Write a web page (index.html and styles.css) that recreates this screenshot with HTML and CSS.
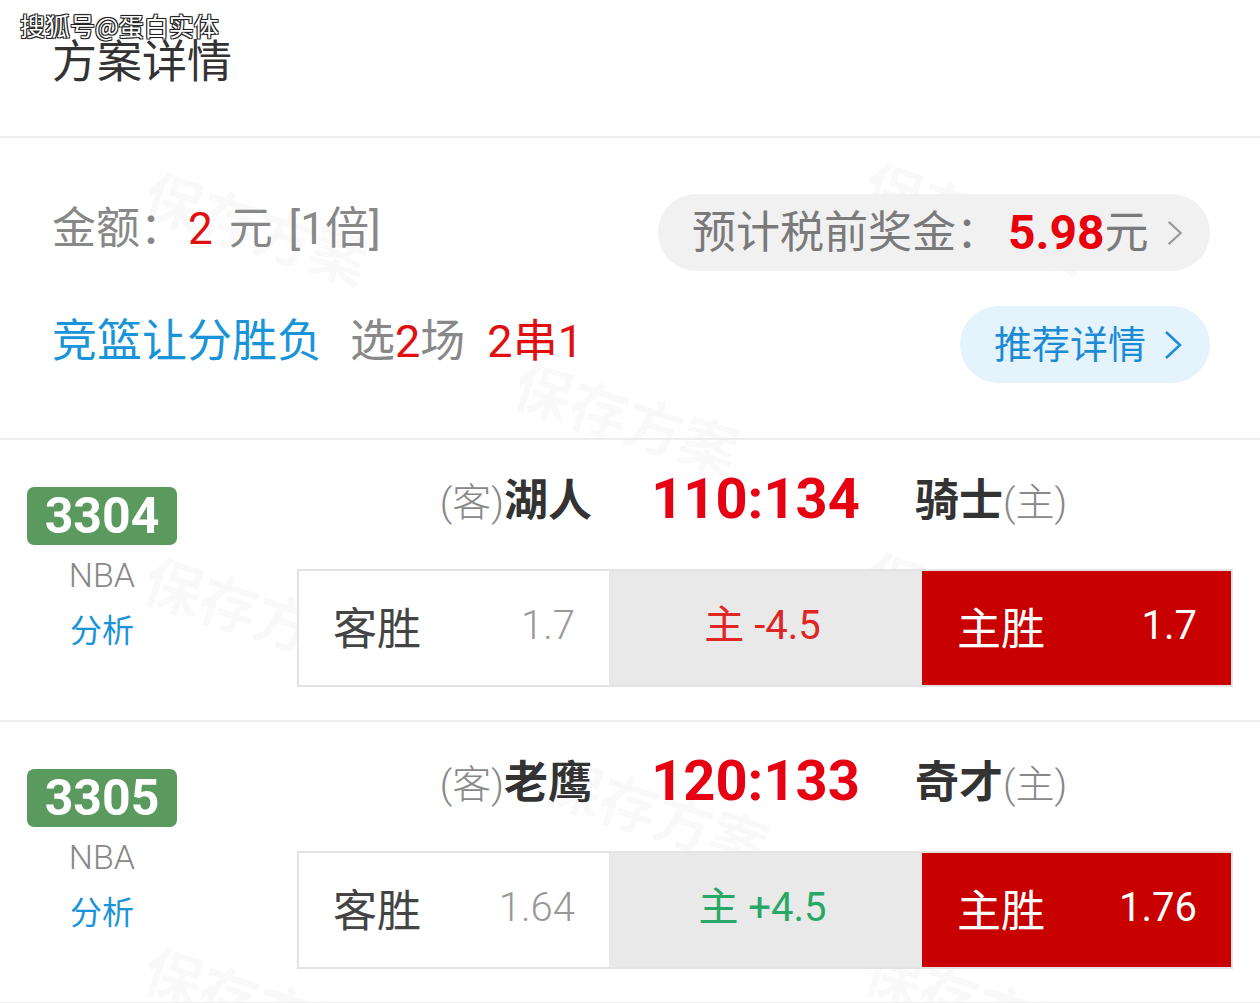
FILE: index.html
```html
<!DOCTYPE html>
<html lang="zh-CN">
<head>
    <meta charset="UTF-8">
    <meta name="viewport" content="width=device-width, initial-scale=1.0">
    <title>方案详情</title>
    <link rel="stylesheet" href="styles.css">
</head>
<body>

<div class="watermarks">
    <span class="wm" style="left:160px;top:150px">保存方案</span>
    <span class="wm" style="left:880px;top:140px">保存方案</span>
    <span class="wm" style="left:530px;top:340px">保存方案</span>
    <span class="wm" style="left:160px;top:535px">保存方案</span>
    <span class="wm" style="left:880px;top:530px">保存方案</span>
    <span class="wm" style="left:560px;top:735px">保存方案</span>
    <span class="wm" style="left:160px;top:925px">保存方案</span>
    <span class="wm" style="left:880px;top:925px">保存方案</span>
</div>

<header class="header">
    <div class="source-mark">搜狐号@蛋白实体</div>
    <h1 class="title">方案详情</h1>
</header>

<section class="summary">
    <div class="summary-row">
        <div class="amount">金额：<span class="red">2</span> 元 [1倍]</div>
        <div class="pill pill-gray">
            <span>预计税前奖金：</span><span class="prize">5.98</span><span>元</span>
            <svg class="chevron" viewBox="0 0 18 30"><polyline points="2,2 16,15 2,28" /></svg>
        </div>
    </div>
    <div class="summary-row">
        <div class="play">
            <span class="blue">竞篮让分胜负</span>
            <span class="pick">选<span class="red">2</span>场</span>
            <span class="red">2串1</span>
        </div>
        <div class="pill pill-blue">
            <span>推荐详情</span>
            <svg class="chevron" viewBox="0 0 18 30"><polyline points="2,2 16,15 2,28" /></svg>
        </div>
    </div>
</section>

<section class="match">
    <div class="side">
        <div class="badge">3304</div>
        <div class="league">NBA</div>
        <div class="analysis">分析</div>
    </div>
    <div class="main">
        <div class="teams">
            <div class="team team-away"><span class="tag">(客)</span>湖人</div>
            <div class="score">110:134</div>
            <div class="team team-home">骑士<span class="tag">(主)</span></div>
        </div>
        <div class="odds">
            <div class="cell"><span class="pick-name">客胜</span><span class="rate">1.7</span></div>
            <div class="cell cell-mid"><span class="handicap minus">主 -4.5</span></div>
            <div class="cell cell-hit"><span class="pick-name">主胜</span><span class="rate">1.7</span></div>
        </div>
    </div>
</section>

<section class="match">
    <div class="side">
        <div class="badge">3305</div>
        <div class="league">NBA</div>
        <div class="analysis">分析</div>
    </div>
    <div class="main">
        <div class="teams">
            <div class="team team-away"><span class="tag">(客)</span>老鹰</div>
            <div class="score">120:133</div>
            <div class="team team-home">奇才<span class="tag">(主)</span></div>
        </div>
        <div class="odds">
            <div class="cell"><span class="pick-name">客胜</span><span class="rate">1.64</span></div>
            <div class="cell cell-mid"><span class="handicap plus">主 +4.5</span></div>
            <div class="cell cell-hit"><span class="pick-name">主胜</span><span class="rate">1.76</span></div>
        </div>
    </div>
</section>

</body>
</html>
```

FILE: styles.css
```css
/* plan detail page */
body {
    margin: 0;
    width: 1260px;
    height: 1003px;
    position: relative;
    background: #fff;
    font-family: Roboto, "Noto Sans CJK SC", sans-serif;
    color: #333;
    overflow: hidden;
}

.watermarks {
    position: absolute;
    left: 0;
    top: 0;
    width: 1260px;
    height: 1003px;
    z-index: 0;
    overflow: hidden;
}
.wm {
    position: absolute;
    font-size: 58px;
    font-weight: 700;
    color: rgba(0, 0, 0, 0.022);
    transform: rotate(18deg);
    transform-origin: left top;
    white-space: nowrap;
}

.header, .summary, .match {
    position: relative;
    z-index: 1;
}

.header {
    height: 138px;
    box-sizing: border-box;
    padding: 40px 0 0 52px;
    border-bottom: 2px solid #ededed;
}
.source-mark {
    position: absolute;
    left: 20px;
    top: 9px;
    font-size: 25px;
    line-height: 32px;
    color: #fff;
    font-family: "Noto Sans CJK SC", sans-serif;
    text-shadow: -1px -1px 0 #222, 1px -1px 0 #222, -1px 1px 0 #222, 1px 1px 0 #222, 0 0 2px #000;
}
.title {
    margin: 0;
    font-size: 45px;
    line-height: 1;
    font-weight: 400;
    color: #333;
}

.summary {
    padding: 56px 50px 55px 52px;
    border-bottom: 2px solid #ededed;
}
.summary-row {
    display: flex;
    justify-content: space-between;
    align-items: center;
    height: 77px;
}
.summary-row + .summary-row {
    margin-top: 35px;
}
.amount {
    font-size: 44px;
    line-height: 1;
    color: #888;
    white-space: pre;
    word-spacing: 5px;
    margin-top: -8px;
}
.amount .red {
    margin-left: 4px;
}
.red {
    color: #e01010;
}
.blue {
    color: #1a94d8;
}
.play {
    font-size: 45px;
    line-height: 1;
    display: flex;
    align-items: center;
    margin-top: -6px;
}
.pick {
    color: #888;
    margin-left: 28px;
}
.play > .red {
    margin-left: 22px;
}

.pill {
    display: flex;
    align-items: center;
    flex-shrink: 0;
    height: 77px;
    box-sizing: border-box;
    border-radius: 39px;
    line-height: 1;
    white-space: nowrap;
}
.pill-gray {
    width: 552px;
    padding: 0 28px 0 34px;
    background: #f1f1f1;
    color: #7a7a7a;
    font-size: 44px;
}
.prize {
    color: #e8000d;
    font-weight: 700;
    font-size: 48px;
    margin-left: 8px;
}
.pill-blue {
    width: 250px;
    padding: 0 28px 0 34px;
    background: #e4f3fc;
    color: #1c8bd6;
    font-size: 38px;
}
.chevron {
    width: 18px;
    height: 30px;
    margin-left: 18px;
    fill: none;
    stroke: currentColor;
    stroke-width: 2.5;
}
.pill-gray .chevron {
    color: #999;
}

.match {
    display: flex;
    height: 280px;
    padding-left: 27px;
    border-bottom: 2px solid #ededed;
}
.side {
    width: 150px;
    padding-top: 47px;
    display: flex;
    flex-direction: column;
    align-items: center;
}
.badge {
    width: 150px;
    height: 58px;
    line-height: 58px;
    text-align: center;
    background: #5b9a5f;
    border-radius: 7px;
    color: #fff;
    font-size: 50px;
    font-weight: 700;
}
.league {
    margin-top: 10px;
    font-size: 34px;
    line-height: 40px;
    font-weight: 300;
    color: #888;
}
.analysis {
    margin-top: 16px;
    font-size: 32px;
    line-height: 40px;
    color: #1a94d8;
}

.main {
    margin-left: 120px;
    width: 936px;
}
.teams {
    display: grid;
    grid-template-columns: 312px 313px 311px;
    height: 124px;
    align-items: center;
}
.team {
    font-size: 44px;
    line-height: 1;
    font-weight: 700;
    color: #333;
    font-family: "Noto Sans CJK SC", sans-serif;
    margin-top: -6px;
}
.tag {
    font-family: Roboto, "Noto Sans CJK SC", sans-serif;
    font-size: 39px;
    font-weight: 300;
    color: #888;
}
.team-away {
    justify-self: end;
    padding-right: 17px;
}
.team-home {
    justify-self: start;
    margin-left: -7px;
}
.score {
    justify-self: center;
    padding-right: 20px;
    font-size: 56px;
    line-height: 1;
    font-weight: 700;
    color: #e60012;
    margin-top: -6px;
}

.odds {
    margin-top: 5px;
    height: 118px;
    box-sizing: border-box;
    border: 2px solid #e3e3e3;
    display: grid;
    grid-template-columns: 310px 313px 1fr;
}
.cell {
    display: flex;
    align-items: center;
    justify-content: space-between;
    padding: 0 34px 4px;
    background: #fff;
    line-height: 1;
}
.pick-name {
    font-size: 44px;
    color: #444;
    font-family: "Noto Sans CJK SC", sans-serif;
}
.rate {
    font-size: 40px;
    font-weight: 300;
    color: #999;
}
.cell-mid {
    background: #e9e9e9;
    justify-content: center;
}
.handicap {
    font-size: 40px;
    padding-right: 6px;
}
.minus {
    color: #e02525;
}
.plus {
    color: #27a866;
}
.cell-hit {
    background: #c80000;
    padding-left: 35px;
}
.cell-hit .pick-name, .cell-hit .rate {
    color: #fff;
    font-weight: 400;
}
```
